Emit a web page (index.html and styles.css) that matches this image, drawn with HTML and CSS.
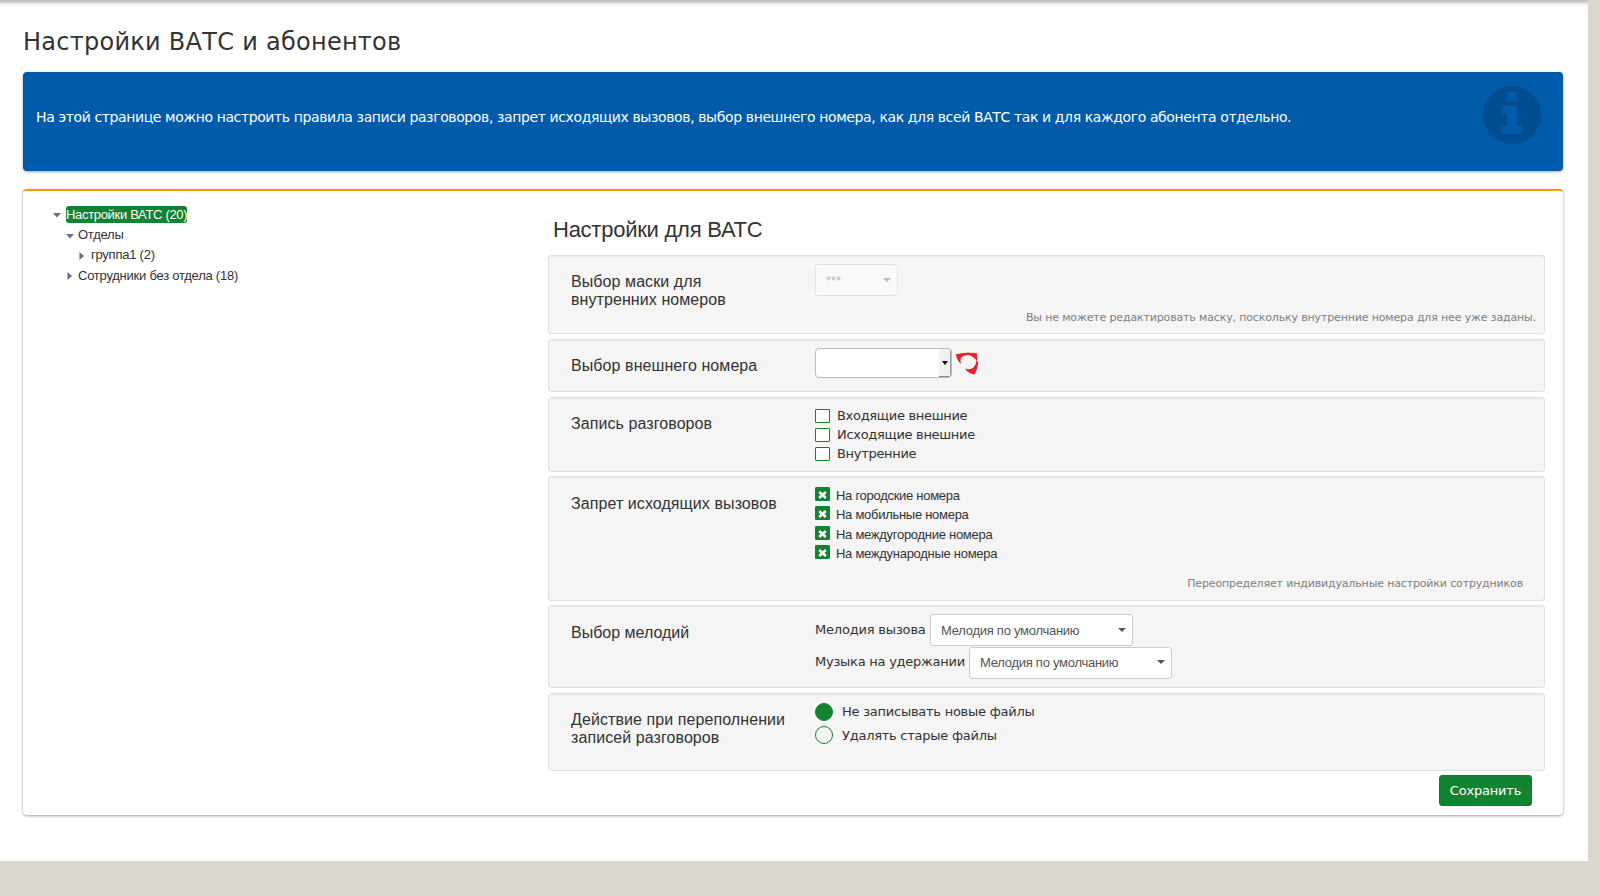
FILE: index.html
```html
<!DOCTYPE html>
<html lang="ru">
<head>
<meta charset="utf-8">
<title>Настройки ВАТС и абонентов</title>
<link rel="stylesheet" href="styles.css">
</head>
<body>
<main class="page">
  <h1 class="title">Настройки ВАТС и абонентов</h1>
  <section class="info">
    <p class="info-text">На этой странице можно настроить правила записи разговоров, запрет исходящих вызовов, выбор внешнего номера, как для всей ВАТС так и для каждого абонента отдельно.</p>
    <svg class="info-icon" viewBox="0 0 58 58"><path fill-rule="evenodd" d="M29 0a29 29 0 1 0 0 58a29 29 0 1 0 0-58zM25 6h8q1 0 1 1v7q0 1-1 1h-8q-1 0-1-1V7q0-1 1-1zM20 20h13q1 0 1 1v19h4q1 0 1 1v6q0 1-1 1H20q-1 0-1-1v-6q0-1 1-1h4V28h-4q-1 0-1-1v-6q0-1 1-1z"/></svg>
  </section>
  <section class="panel">
    <nav class="tree">
      <div class="node"><svg class="arrow" viewBox="0 0 8 8"><path d="M0 2h8L4 6.500z"/></svg><span class="selected">Настройки ВАТС (20)</span></div>
      <div class="node level1"><svg class="arrow" viewBox="0 0 8 8"><path d="M0 2h8L4 6.500z"/></svg><span>Отделы</span></div>
      <div class="node level2"><svg class="arrow" viewBox="0 0 8 8"><path d="M1.500 0v8L6 4z"/></svg><span>группа1 (2)</span></div>
      <div class="node level1"><svg class="arrow" viewBox="0 0 8 8"><path d="M1.500 0v8L6 4z"/></svg><span>Сотрудники без отдела (18)</span></div>
    </nav>
    <form class="settings">
      <h2 class="heading">Настройки для ВАТС</h2>
      <div class="card mask">
        <h3 class="label">Выбор маски для<br>внутренних номеров</h3>
        <div class="field"><div class="select disabled"><span>***</span><svg class="caret" viewBox="0 0 8 4"><path d="M0 0h8L4 4z"/></svg></div></div>
        <p class="hint">Вы не можете редактировать маску, поскольку внутренние номера для нее уже заданы.</p>
      </div>
      <div class="card number">
        <h3 class="label">Выбор внешнего номера</h3>
        <div class="field row">
          <div class="native"><span class="native-btn"><svg viewBox="0 0 6 4"><path d="M0 0h6L3 4z"/></svg></span></div>
          <svg class="brand" viewBox="0 0 24 24"><path d="M.7 2.500Q8 .4 15 1L13.500 3Q7.500 3.200 5.800 6.500Q5 9 6 12Q2.300 9 .7 2.500z"/><path d="M12 .8Q20 .4 22.300 1.700L22 9.500Q19.500 4.500 13.500 3z"/><path d="M10 16.500Q15 18.500 18.500 15.500Q21.500 12.500 21.300 9L23.300 10Q22.800 17 19.500 22.500Q13 21.500 10 16.500z"/></svg>
        </div>
      </div>
      <div class="card record">
        <h3 class="label">Запись разговоров</h3>
        <div class="field checks">
          <label><i class="box"></i><span>Входящие внешние</span></label>
          <label><i class="box"></i><span>Исходящие внешние</span></label>
          <label><i class="box"></i><span>Внутренние</span></label>
        </div>
      </div>
      <div class="card deny">
        <h3 class="label">Запрет исходящих вызовов</h3>
        <div class="field checks">
          <label><i class="box on"><svg viewBox="0 0 9 8"><path d="M1.200 1L7.800 7M7.800 1L1.200 7"/></svg></i><span>На городские номера</span></label>
          <label><i class="box on"><svg viewBox="0 0 9 8"><path d="M1.200 1L7.800 7M7.800 1L1.200 7"/></svg></i><span>На мобильные номера</span></label>
          <label><i class="box on"><svg viewBox="0 0 9 8"><path d="M1.200 1L7.800 7M7.800 1L1.200 7"/></svg></i><span>На междугородние номера</span></label>
          <label><i class="box on"><svg viewBox="0 0 9 8"><path d="M1.200 1L7.800 7M7.800 1L1.200 7"/></svg></i><span>На международные номера</span></label>
        </div>
        <p class="hint">Переопределяет индивидуальные настройки сотрудников</p>
      </div>
      <div class="card tunes">
        <h3 class="label">Выбор мелодий</h3>
        <div class="field">
          <div class="row"><span class="caption call">Мелодия вызова</span><div class="select wide"><span>Мелодия по умолчанию</span><svg class="caret" viewBox="0 0 8 4"><path d="M0 0h8L4 4z"/></svg></div></div>
          <div class="row"><span class="caption hold">Музыка на удержании</span><div class="select wide"><span>Мелодия по умолчанию</span><svg class="caret" viewBox="0 0 8 4"><path d="M0 0h8L4 4z"/></svg></div></div>
        </div>
      </div>
      <div class="card overflow">
        <h3 class="label">Действие при переполнении<br>записей разговоров</h3>
        <div class="field radios">
          <label><i class="radio on"></i><span>Не записывать новые файлы</span></label>
          <label><i class="radio"></i><span>Удалять старые файлы</span></label>
        </div>
      </div>
      <button class="save" type="button">Сохранить</button>
    </form>
  </section>
</main>
</body>
</html>
```
FILE: styles.css
```css
* { box-sizing: border-box; }
body { margin: 0; background: #dad8cb; font: 13px "DejaVu Sans", sans-serif; color: #333; overflow: hidden; }
h1, h2, h3, p { margin: 0; font-weight: normal; }
svg { display: block; }
.page { width: 1588px; height: 861px; padding: 0 25px 0 23px; background: linear-gradient(#c6c6c6 0, #c6c6c6 2px, #e4e4e4 3px, #fff 6px); }
.title { height: 72px; padding-top: 28px; font-size: 24px; line-height: 28px; letter-spacing: .27px; white-space: nowrap; }
.info { display: flex; justify-content: space-between; height: 99px; padding: 14px 22px 0 13px; border-radius: 4px; background: #005bab; box-shadow: 0 1px 3px rgba(0,0,0,.35); }
.info-text { padding-top: 22px; font-size: 14px; line-height: 18px; letter-spacing: -.388px; color: #fff; white-space: nowrap; }
.info-icon { width: 58px; height: 58px; fill: #004c91; }
.panel { display: flex; height: 626px; margin-top: 18px; border-top: 2px solid #f39c12; border-radius: 4px; background: #fff; box-shadow: 0 1px 3px rgba(0,0,0,.38); }
.tree { width: 525px; padding: 13px 0 0 30px; font: 13px "Liberation Sans", sans-serif; letter-spacing: -.24px; }
.node { display: flex; align-items: center; height: 20.400px; white-space: nowrap; }
.level1 { padding-left: 13px; }
.level2 { padding-left: 25px; }
.level1 .arrow { margin-right: 4px; }
.arrow { width: 8px; height: 8px; margin: 2px 5px 0 0; fill: #6c6f78; }
.selected { height: 17px; line-height: 17px; border-radius: 3px; background: #128233; color: #fff; letter-spacing: -.32px; }
.settings { display: flex; flex-direction: column; width: 997px; }
.heading { height: 64px; padding: 25px 0 0 5px; font: 22px/28px "Liberation Sans", sans-serif; letter-spacing: -.25px; }
.card { display: grid; grid-template-columns: 244px 1fr; grid-template-rows: 1fr auto; padding-left: 22px; border: 1px solid #e1e1e1; border-radius: 3px; background: #f5f5f5; box-shadow: inset 0 1px 1px rgba(0,0,0,.05); }
.label { padding-top: 17px; font: 16px/18px "Liberation Sans", sans-serif; letter-spacing: .08px; white-space: nowrap; }
.field { padding-top: 8px; }
.row { display: flex; }
.hint { grid-column: 1 / -1; text-align: right; font-size: 11px; line-height: 14px; letter-spacing: -.15px; color: #808080; }
.mask { height: 79px; margin-bottom: 5px; }
.mask .hint { padding: 0 8px 8px 0; }
.number { height: 53px; margin-bottom: 5px; }
.record { height: 75px; margin-bottom: 4px; }
.record .checks { letter-spacing: -.31px; }
.deny { height: 125px; margin-bottom: 4px; }
.deny .hint { padding: 0 21px 9px 0; }
.deny .label, .tunes .label { padding-top: 18px; }
.tunes .label { letter-spacing: 0; }
.tunes { height: 83px; margin-bottom: 5px; }
.overflow { height: 78px; margin-bottom: 4px; }
.select { display: flex; justify-content: space-between; align-items: center; height: 32px; padding: 0 6px 0 10px; border: 1px solid #ccc; border-radius: 3px; background: #fff; color: #555; font: 13px "Liberation Sans", sans-serif; letter-spacing: -.26px; white-space: nowrap; }
.select.wide { width: 203px; }
.tunes .row + .row { margin-top: 1px; }
.tunes .row + .row .select { padding-bottom: 1px; }
.select.disabled { width: 83px; background: #f9f9f9; border-color: #e4e4e4; color: #bbb; letter-spacing: -.1px; }
.caret { width: 8px; height: 4px; margin-top: -1px; fill: currentColor; }
.native { display: flex; justify-content: flex-end; width: 137px; height: 30px; border: 1px solid #bbb; border-radius: 4px; background: #fff; overflow: hidden; }
.native-btn { display: flex; align-items: center; justify-content: center; width: 12px; border-right: 1px solid #999; border-bottom: 1px solid #888; background: #f0f0ef; }
.native-btn svg { width: 6px; height: 4px; }
.brand { width: 24px; height: 24px; margin: 4px 0 0 3px; fill: #ee2029; }
.checks label, .radios label { display: flex; align-items: center; height: 19px; white-space: nowrap; }
.box { display: flex; align-items: center; justify-content: center; width: 15px; height: 14px; margin-right: 7px; border: 1px solid #128233; border-radius: 1px; background: #fff; }
.box.on { margin: -3px 6px 0 0; background: #128233; }
.box svg { width: 9px; height: 8px; margin-top: 2px; fill: none; stroke: #fff; stroke-width: 2.600; }
.deny .checks { padding-top: 9px; font: 13px "Liberation Sans", sans-serif; letter-spacing: -.28px; }
.deny .checks label { height: 19.300px; }
.caption { line-height: 32px; letter-spacing: -.19px; white-space: nowrap; }
.call { width: 115px; }
.hold { width: 154px; letter-spacing: -.25px; }
.tunes .hold { line-height: 30px; }
.radios label { height: 23.500px; }
.radios { padding-top: 6px; letter-spacing: -.25px; }
.radio { width: 18px; height: 18px; margin-right: 9px; border: 1px solid #128233; border-radius: 50%; }
.radio.on { background: #128233; }
.save { align-self: flex-end; width: 93px; height: 31px; margin-right: 13px; padding: 0; border: 1px solid #117a30; border-radius: 3px; background: #128233; color: #fff; font: 13px "DejaVu Sans", sans-serif; letter-spacing: -.2px; }
```
